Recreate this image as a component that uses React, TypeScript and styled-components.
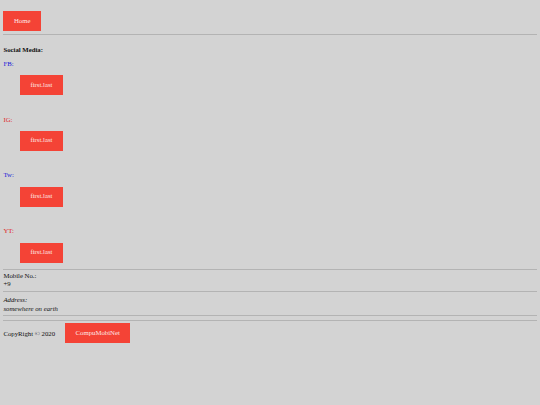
import React from "react";
import { styled, createGlobalStyle } from "styled-components";

const GlobalStyle = createGlobalStyle`
  html, body {
    margin: 0;
    background: #d3d3d3;
  }

  body {
    font-family: "Liberation Serif", "Times New Roman", serif;
    font-size: 6.75px;
    color: #111;
  }
`;

const Page = styled.div`
  padding: 0 3.4px;
  min-height: 405px;
  box-sizing: border-box;
`;

const Nav = styled.nav`
  display: flex;
  padding-top: 11px;
`;

const RedButton = styled.a`
  display: inline-flex;
  align-items: center;
  height: 20px;
  padding: 0 10.5px;
  background: #f44336;
  color: #fde8e6;
  font-size: 6.75px;
  line-height: 1;
  text-decoration: none;
  white-space: nowrap;
`;

const Rule = styled.hr<{ $top?: number; $bottom?: number }>`
  height: 0;
  border: none;
  border-top: 1px solid #b3b3b3;
  margin: ${(p) => p.$top ?? 0}px 0 ${(p) => p.$bottom ?? 0}px;
`;

const Heading = styled.div`
  margin-top: 10.35px;
  font-weight: bold;
  line-height: 8.5px;
`;

const SocialList = styled.div`
  display: flex;
  flex-direction: column;
  padding-top: 5.5px;
  gap: 20.6px;
`;

const SocialItem = styled.div`
  display: flex;
  flex-direction: column;
  align-items: flex-start;
  gap: 6.75px;
`;

const Label = styled.span<{ $color: string }>`
  color: ${(p) => p.$color};
  line-height: 8.5px;
`;

const Handle = styled(RedButton)`
  margin-left: 16.6px;
`;

const Contact = styled.div`
  padding: 2px 0 2.8px;
  line-height: 8.3px;
`;

const Address = styled.address`
  padding: 3.5px 0 1.6px;
  line-height: 8.6px;
  font-style: italic;
`;

const Footer = styled.footer`
  display: flex;
  align-items: center;
  gap: 10px;
  margin-top: 2px;
`;

const socials = [
  { label: "FB:", color: "#2020d8" },
  { label: "IG:", color: "#e02a2a" },
  { label: "Tw:", color: "#2020d8" },
  { label: "YT:", color: "#e02a2a" },
];

export default function App() {
  return (
    <>
      <GlobalStyle />
      <Page>
        <Nav>
          <RedButton href="#">Home</RedButton>
        </Nav>
        <Rule $top={3.4} />

        <Heading>Social Media:</Heading>
        <SocialList>
          {socials.map((s) => (
            <SocialItem key={s.label}>
              <Label $color={s.color}>{s.label}</Label>
              <Handle href="#">first.last</Handle>
            </SocialItem>
          ))}
        </SocialList>

        <Rule $top={6.5} />
        <Contact>
          Mobile No.:
          <br />
          +9
        </Contact>
        <Rule />
        <Address>
          Address:
          <br />
          somewhere on earth
        </Address>
        <Rule />
        <Rule $top={4.5} />

        <Footer>
          <span>CopyRight © 2020</span>
          <RedButton href="#">CompuMobiNet</RedButton>
        </Footer>
      </Page>
    </>
  );
}
